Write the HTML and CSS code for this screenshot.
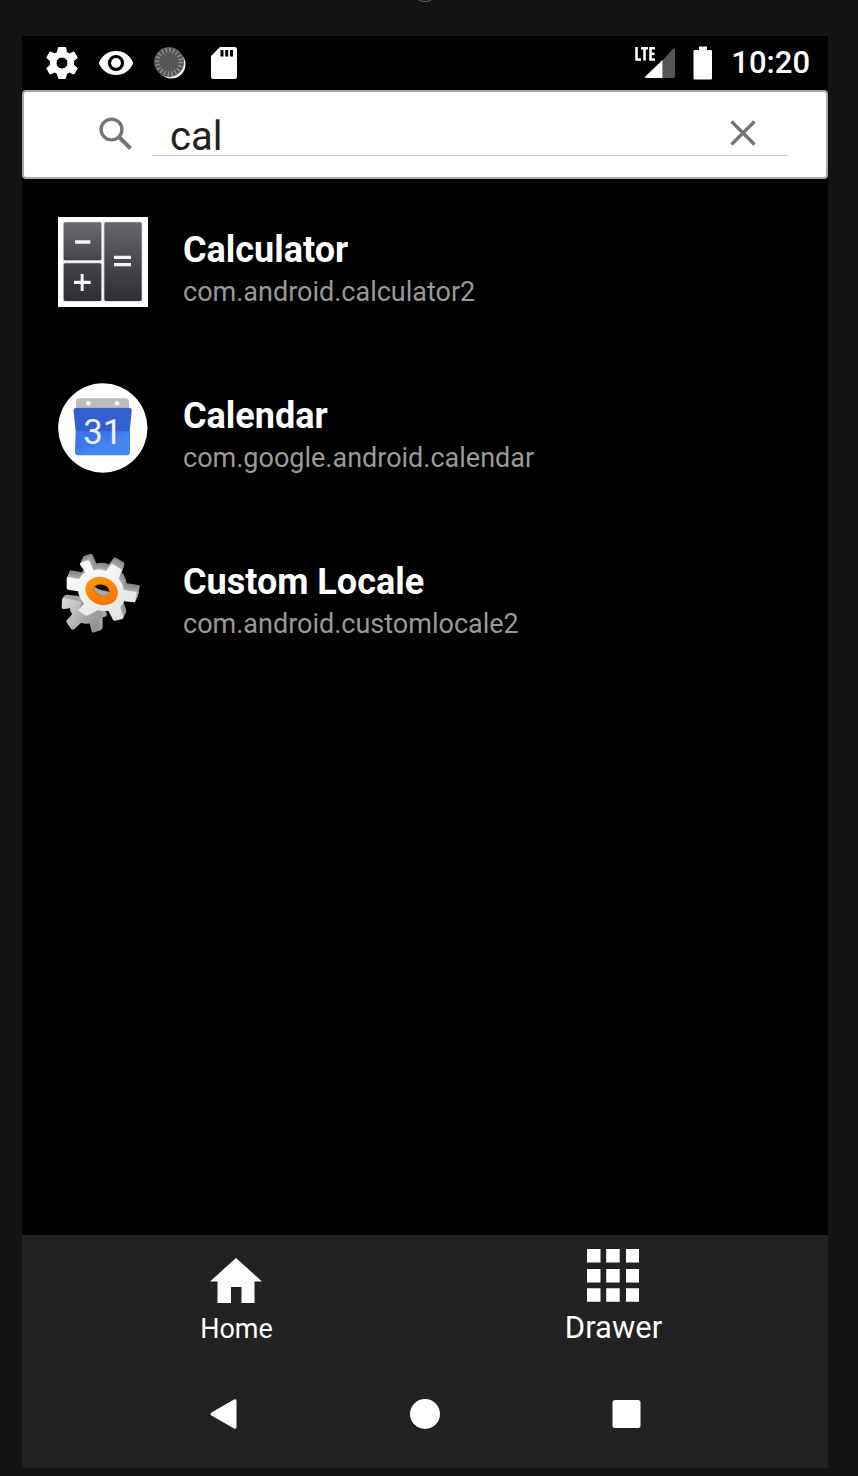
FILE: index.html
```
<!DOCTYPE html>
<html lang="en">
<head>
<meta charset="utf-8">
<meta name="viewport" content="width=device-width, initial-scale=1">
<title>App search</title>
<link rel="stylesheet" href="styles.css">
</head>
<body>
<div class="device">
  <span class="camera"></span>
  <div class="screen">
    <header class="status">
      <div class="status-left">
        <svg class="status-icon" viewBox="0 0 36 36"><path fill="#fff" stroke="#fff" stroke-linejoin="round" fill-rule="evenodd" d="M14.500 2.500h7l1 4.700 2.800 1.700 4.700-2 3.300 5.800-3.800 3.300v4l3.800 3.300-3.300 5.800-4.700-2-2.800 1.700-1 4.700h-7l-1-4.700-2.800-1.700-4.700 2-3.300-5.800L6.500 20v-4l-3.800-3.300L6 6.900l4.700 2 2.800-1.700zM18 12a6 6 0 1 0 0 12 6 6 0 0 0 0-12z"/></svg>
        <svg class="status-icon" viewBox="0 0 36 36"><path fill="#fff" d="M.700 18C3.500 10.700 10.200 6 18 6s14.500 4.700 17.300 12C32.500 25.300 25.800 30 18 30S3.500 25.300.700 18z"/><circle cx="18" cy="18" r="6.500" fill="#fff" stroke="#000" stroke-width="3.200"/></svg>
        <svg class="status-icon" viewBox="0 0 36 36"><circle cx="19.500" cy="19.500" r="14" fill="#eee"/><circle cx="17" cy="17" r="15" fill="#555"/><circle cx="17" cy="17" r="11.800" fill="none" stroke="#999" stroke-width="4.500" stroke-dasharray="1.200 2.507"/></svg>
        <svg class="status-icon" viewBox="0 0 36 36"><path fill="#fff" d="M14 2h14.500A2.500 2.500 0 0 1 31 4.500v27a2.500 2.500 0 0 1-2.500 2.500h-21A2.500 2.500 0 0 1 5 31.500V11z"/><path fill="#000" d="M14.500 5h3v6.500h-3zM19.200 5h3v6.500h-3zM24 5h3v6.500h-3z"/></svg>
      </div>
      <div class="status-right">
        <span class="signal">
          <svg class="signal-bars" viewBox="0 0 30 30"><path fill="#555" d="M17.500 12.500 28 .800Q30-1 30 2v26q0 2-2 2H17.500z"/><path fill="#fff" d="M17.500 12v18H1.500Q-1 30 .800 28z"/></svg>
          <svg class="signal-label" viewBox="0 0 22 16" role="img" aria-label="LTE"><path d="M1.500 1v12.500H6M6 2.200h7M9.500 2v12.500M20 2.200h-4.500v11.300H20M15.500 7.800h4" fill="none" stroke="#fff" stroke-width="2.600"/></svg>
        </span>
        <svg class="battery" viewBox="0 0 20 34"><path fill="#fff" d="M6 .500h8V4h4q1 0 1 1v27.500q0 1-1 1H1.500q-1 0-1-1V5q0-1 1-1H6z"/></svg>
        <time class="clock">10:20</time>
      </div>
    </header>

    <form class="search" role="search">
      <svg class="search-icon" viewBox="0 0 36 36" fill="none" stroke="#757575"><circle cx="13.500" cy="13.500" r="10.400" stroke-width="3.400"/><path d="m21.500 21.500 11 11" stroke-width="4"/></svg>
      <div class="search-field">
        <input class="search-input" type="text" value="cal" aria-label="Search apps">
        <button class="clear" type="button" aria-label="Clear"><svg class="clear-icon" viewBox="0 0 36 36"><path d="m6.500 6.500 23 23m0-23-23 23" stroke="#757575" stroke-width="3.300"/></svg></button>
      </div>
    </form>

    <main class="results">
      <article class="app">
        <svg class="app-icon" viewBox="54 51 270 270">
          <defs><linearGradient id="key" x1="0" y1="0" x2="0" y2="1"><stop offset="0" stop-color="#66656a"/><stop offset="1" stop-color="#2f2d34"/></linearGradient>
          <linearGradient id="keyLow" x1="0" y1="0" x2="0" y2="1"><stop offset="0" stop-color="#46454b"/><stop offset="1" stop-color="#2f2d34"/></linearGradient>
          <linearGradient id="keyTop" x1="0" y1="0" x2="0" y2="1"><stop offset="0" stop-color="#6c6b70"/><stop offset="1" stop-color="#45444a"/></linearGradient></defs>
          <path fill="#fff" d="M54 51h270v270H54z"/>
          <path fill="#ddd" d="M69 65h238v240H69z"/>
          <path d="M188 66v238M70 185h116" stroke="#f4f4f4" stroke-width="5"/>
          <rect x="71" y="67" width="113" height="114" rx="5" fill="url(#keyTop)"/>
          <rect x="71" y="190" width="113" height="113" rx="5" fill="url(#keyLow)"/>
          <rect x="193" y="67" width="112" height="236" rx="5" fill="url(#key)"/>
          <path fill="#f5f5f5" d="M105 121h46v10h-46zM222 167h51v10h-51zM222 189h51v10h-51zM102 242h50v10h-50zM122 222h9v51h-9z"/>
        </svg>
        <div class="app-text"><h2 class="app-name">Calculator</h2><p class="app-id">com.android.calculator2</p></div>
      </article>
      <article class="app">
        <svg class="app-icon" viewBox="54 38 270 270">
          <defs><linearGradient id="page" x1="0" y1="0" x2="1" y2="1"><stop offset=".35" stop-color="#3b78e7"/><stop offset=".6" stop-color="#4285f4"/></linearGradient></defs>
          <circle cx="188.500" cy="173" r="134" fill="#fff"/>
          <path fill="#bdbdbd" d="M108 112V95q0-11 11-11h137q11 0 11 11v17z"/>
          <circle cx="145" cy="99" r="7" fill="#fff"/><circle cx="231" cy="99" r="7" fill="#fff"/>
          <path fill="url(#page)" d="M107 182h163v63q0 10-10 10H115q-10 0-10-10z"/>
          <path fill="#3360cf" d="M110 112h156q11 0 9 12l-6 59H107l-6-59q-2-12 9-12z"/>
          <text class="date" x="188" y="221" text-anchor="middle">31</text>
        </svg>
        <div class="app-text"><h2 class="app-name">Calendar</h2><p class="app-id">com.google.android.calendar</p></div>
      </article>
      <article class="app">
        <svg class="app-icon" viewBox="54 27 270 270">
          <defs>
            <linearGradient id="face" x1="0" y1="0" x2=".7" y2="1"><stop offset="0" stop-color="#fff"/><stop offset=".5" stop-color="#f2f2f2"/><stop offset="1" stop-color="#e2e2e2"/></linearGradient>
            <linearGradient id="back" x1="0" y1="0" x2="1" y2=".6"><stop offset="0" stop-color="#dcdcdc"/><stop offset="1" stop-color="#929292"/></linearGradient>
            <linearGradient id="ring" x1="0" y1="0" x2="1" y2="1"><stop offset="0" stop-color="#ff9c14"/><stop offset=".5" stop-color="#ff8500"/><stop offset="1" stop-color="#f06c00"/></linearGradient>
            <path id="gear" d="M120 74 Q119 70 123 68L140 62Q147 60 149 65L160 90Q179 86 198 93L212 74Q215 71 219 73L242 87Q246 90 244 94L236 116Q249 132 251 150L287 155Q291 156 290 160L286 184Q285 188 281 187L251 184Q249 194 241 203L250 230Q251 235 247 237L226 242Q221 243 219 239L205 212Q189 215 174 210L144 226Q139 228 135 225L114 211 133 191Q118 176 114 154L84 149Q80 148 80 144V115Q80 111 84 111L117 117Q122 105 136 97Z"/>
          </defs>
          <path fill="#a4a4a4" d="M68 176Q70 165 80 164L116 168 200 216V229L188 232 188 260Q188 266 183 270L163 277 149 250 116 248 103 267 94 267 80 247 97 223 90 204 71 207z"/>
          <path fill="url(#back)" d="M66 180Q66 174 72 174L112 182 186 216V229L176 239 179 264Q179 270 174 272L163 277Q157 279 155 274L149 250Q136 253 124 248L103 267Q98 271 94 267L80 247Q77 243 81 239L97 223Q89 214 90 204L71 207Q65 208 65 202Z"/>
          <use href="#gear" x="9" y="-20" fill="#858585"/>
          <use href="#gear" x="8" y="-17" fill="#8c8c8c"/>
          <use href="#gear" x="7" y="-14" fill="#939393"/>
          <use href="#gear" x="5" y="-11" fill="#9a9a9a"/>
          <use href="#gear" x="4" y="-8" fill="#a1a1a1"/>
          <use href="#gear" x="2" y="-4" fill="#aaa"/>
          <use href="#gear" fill="url(#face)"/>
          <ellipse cx="185" cy="153" rx="50" ry="41" transform="rotate(22 185 153)" fill="url(#ring)"/>
          <ellipse cx="184" cy="151" rx="26" ry="18" transform="rotate(18 184 151)" fill="#c77a2c"/>
          <path fill="#111" d="M164 140Q174 131 191 135 207 140 208 156 199 152 187 151 174 148 164 140z"/>
          <path fill="#aaa" d="M162 142Q174 149 190 153q10 2 17 3-5 13-22 10-21-5-23-24z"/>
        </svg>
        <div class="app-text"><h2 class="app-name">Custom Locale</h2><p class="app-id">com.android.customlocale2</p></div>
      </article>
    </main>

    <nav class="tabs" aria-label="Launcher">
      <a class="tab" href="#home"><svg class="tab-icon" viewBox="0 0 54 54"><path fill="#fff" d="M26 9 52 32.500h-7.500V54H31.500V38H21v16H7.500V32.500H0z"/></svg><span class="tab-label">Home</span></a>
      <a class="tab tab-current" href="#drawer" aria-current="page"><svg class="tab-icon" viewBox="1 1 54 54"><path fill="#fff" d="M1 1h13.500v13.500H1zM20.200 1h13.500v13.500H20.200zM40 1h13v13.500H40zM1 21h13.500v13.500H1zM20.200 21h13.500v13.500H20.200zM40 21h13v13.500H40zM1 40.300h13.500v13.500H1zM20.200 40.300h13.500v13.500H20.200zM40 40.300h13v13.500H40z"/></svg><span class="tab-label">Drawer</span></a>
    </nav>
    <div class="system">
      <button class="key" type="button" aria-label="Back"><svg class="key-icon" viewBox="0 0 32 32"><path fill="#fff" d="M4.500 14.500Q2.500 16 4.500 17.500L27 30.500q2.500 1 2.500-1.500V3Q29.500.500 27 1.500z"/></svg></button>
      <button class="key" type="button" aria-label="Home"><svg class="key-icon" viewBox="0 0 32 32"><circle cx="16" cy="16" r="15" fill="#fff"/></svg></button>
      <button class="key" type="button" aria-label="Recents"><svg class="key-icon" viewBox="0 0 32 32"><rect x="1.500" y="2" width="28" height="28" rx="2.500" fill="#fff"/></svg></button>
    </div>
  </div>
</div>
</body>
</html>
```
FILE: styles.css
```
* { box-sizing: border-box; }

body {
  margin: 0;
  background: #141414;
  color: #fff;
  font-family: Roboto, "Liberation Sans", sans-serif;
}

svg { display: block; flex: none; }

.device {
  position: relative;
  display: flex;
  min-height: 100vh;
  padding: 36px 30px 8px 22px;
  overflow: hidden;
}

.camera {
  position: absolute;
  top: -22px;
  left: calc(50% - 16px);
  width: 24px;
  height: 24px;
  border-bottom: 1px solid #666;
  border-radius: 50%;
}

.screen {
  display: flex;
  flex: 1;
  flex-direction: column;
  min-width: 0;
  background: #000;
}

.status {
  display: flex;
  justify-content: space-between;
  height: 54px;
  padding: 0 18px 0 22px;
}

.status-left, .status-right { display: flex; align-items: center; gap: 18px; }
.status-icon { width: 36px; height: 36px; }

.signal { position: relative; padding-left: 10px; }
.signal-bars { width: 30px; height: 30px; }
.signal-label { position: absolute; top: -2px; left: 0; width: 22px; height: 16px; }
.battery { width: 20px; height: 34px; }
.clock { font-size: 31px; font-weight: 500; line-height: 36px; }

.search {
  display: flex;
  align-items: center;
  gap: 18px;
  height: 89px;
  padding: 0 38px 2px 74px;
  background: #fff;
  border: 2px solid #a6a6a8;
  border-radius: 4px;
}

.search-icon { width: 36px; height: 36px; }

.search-field {
  display: flex;
  flex: 1;
  align-items: center;
  height: 44px;
  min-width: 0;
  border-bottom: 1px solid #cacaca;
}

.search-input {
  flex: 1;
  min-width: 0;
  height: 42px;
  padding: 6px 18px 0;
  border: 0;
  outline: 0;
  background: none;
  color: #212121;
  font: 40px/36px Roboto, "Liberation Sans", sans-serif;
}

.clear, .key { padding: 0; border: 0; background: none; }
.clear { margin-right: 27px; }
.clear-icon { width: 36px; height: 36px; }

.results { flex: 1; }

.app {
  display: flex;
  align-items: center;
  gap: 35px;
  height: 166px;
  padding: 0 36px;
}

.app-icon { width: 90px; height: 90px; }
.app-text { min-width: 0; padding-top: 18px; }
.app-name { margin: 0; font-size: 36px; font-weight: 700; line-height: 42px; }
.app-id { margin: 0; color: #999; font-size: 27px; line-height: 42px; }
.date { fill: #eee; font-size: 104px; font-weight: 400; }

.tabs {
  display: flex;
  padding: 14px 26px 0;
  height: 126px;
  background: #222;
}

.tab {
  display: flex;
  flex: 1;
  flex-direction: column;
  align-items: center;
  gap: 6px;
  color: #fff;
  text-decoration: none;
}

.tab-icon { width: 54px; height: 54px; }
.tab-label { font-size: 27px; line-height: 40px; }
.tab-current .tab-label { font-size: 31px; line-height: 38px; }

.system {
  display: flex;
  align-items: center;
  height: 107px;
  padding: 0 100px 2px;
  background: #222;
}

.key { display: flex; flex: 1; justify-content: center; }
.key-icon { width: 32px; height: 32px; }
```
